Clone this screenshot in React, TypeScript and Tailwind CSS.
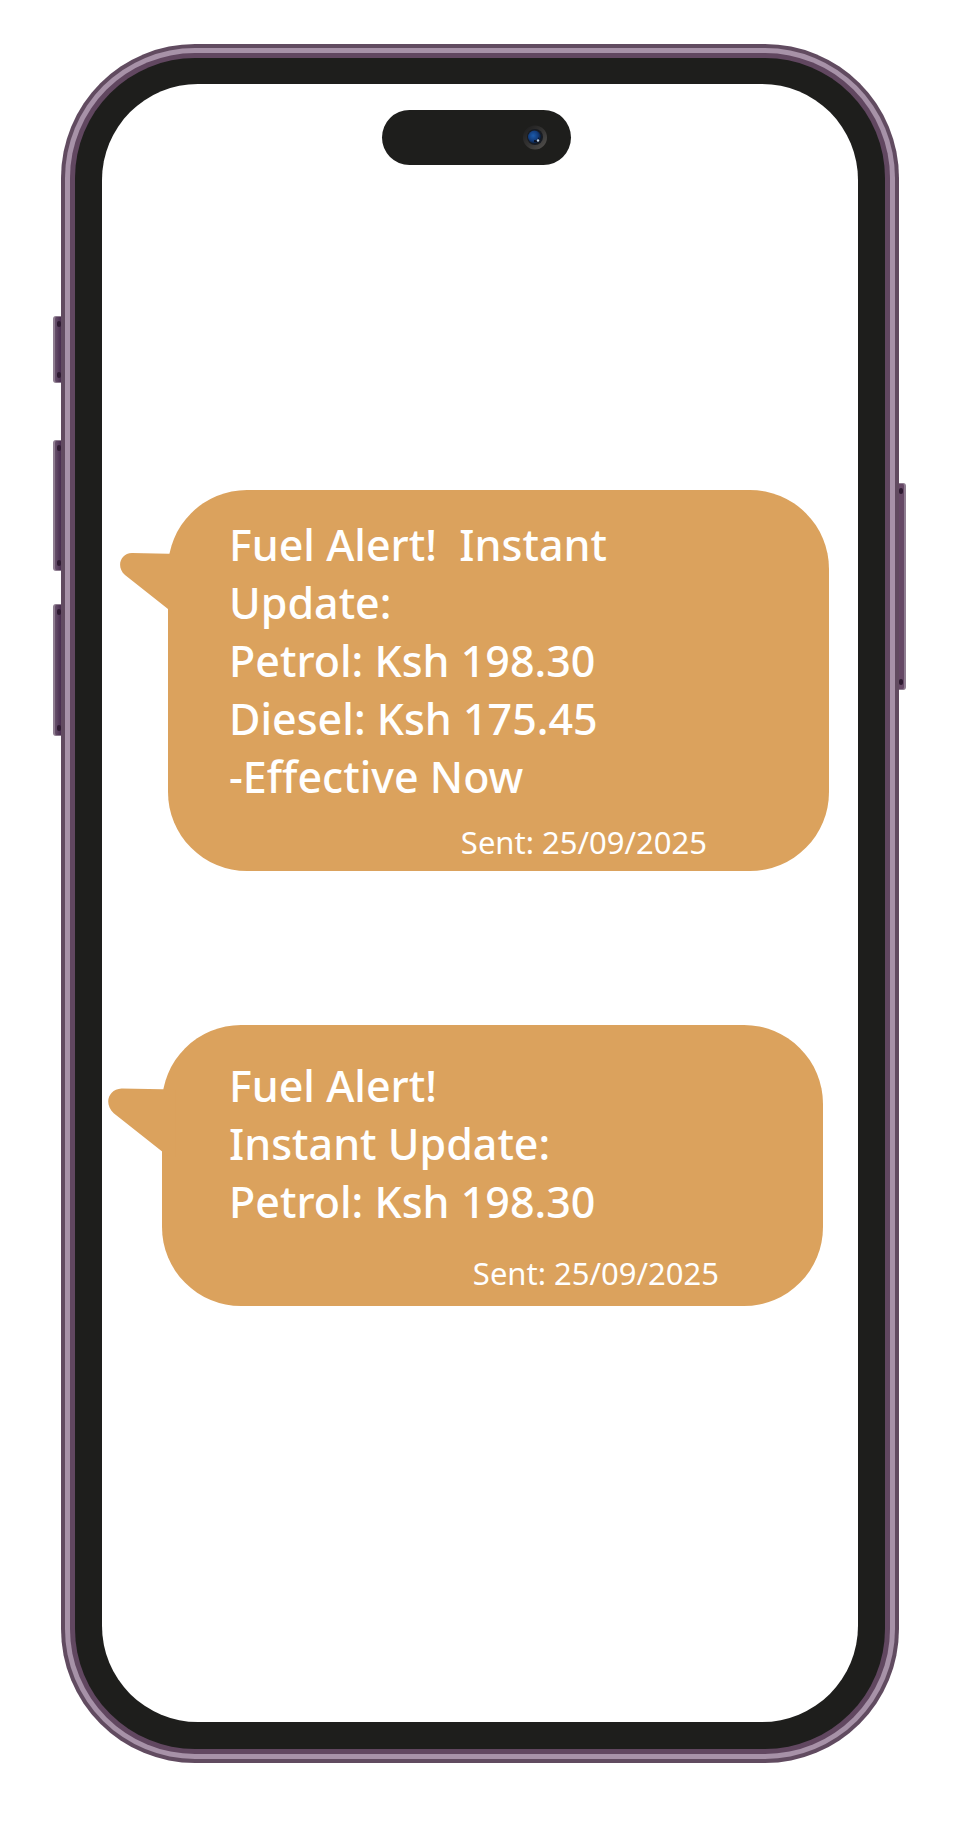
type MessageProps = {
  lines: string[];
  sent: string;
  className: string;
  tailClassName: string;
  bodyClassName: string;
  sentClassName: string;
};

function Message({ lines, sent, className, tailClassName, bodyClassName, sentClassName }: MessageProps) {
  return (
    <article className={`relative rounded-[79px] bg-[#dba25d] text-white ${className}`}>
      <svg
        aria-hidden="true"
        viewBox="0 0 70 64"
        className={`absolute top-[60px] fill-[#dba25d] ${tailClassName}`}
      >
        <path d="M12 3L60 4V69L48 59L5 25C-4 17 0 3.500 12 3Z" />
      </svg>
      <div className={`relative text-[43px] leading-[58px] font-medium ${bodyClassName}`}>
        {lines.map((line) => (
          <p key={line} className="whitespace-pre-wrap">
            {line}
          </p>
        ))}
      </div>
      <p className={`text-right text-[31px] leading-[42px] ${sentClassName}`}>{sent}</p>
    </article>
  );
}

function SideButton({ className }: { className: string }) {
  return (
    <span
      aria-hidden="true"
      className={`absolute flex w-[9px] flex-col justify-between border-y border-[#8f7e91] py-[4px] ${className}`}
    >
      <span className="h-[6px] w-[4px] self-center rounded-full bg-[#2e1a31]" />
      <span className="h-[6px] w-[4px] self-center rounded-full bg-[#2e1a31]" />
    </span>
  );
}

function Camera() {
  return (
    <svg aria-hidden="true" viewBox="0 0 26 26" className="h-[26px] w-[26px]">
      <defs>
        <linearGradient id="ring" x1="0" y1="0" x2="1" y2="1">
          <stop offset="0" stopColor="#1b1b1b" />
          <stop offset="0.5" stopColor="#343332" />
          <stop offset="1" stopColor="#555350" />
        </linearGradient>
        <radialGradient id="lens" cx="0.4" cy="0.4" r="0.65">
          <stop offset="0" stopColor="#1c5cad" />
          <stop offset="0.6" stopColor="#123b79" />
          <stop offset="1" stopColor="#0b1627" />
        </radialGradient>
      </defs>
      <circle cx="13" cy="12.500" r="12" fill="url(#ring)" />
      <circle cx="13" cy="12" r="8" fill="#171b22" />
      <circle cx="12.500" cy="12" r="6.500" fill="url(#lens)" />
      <path d="M12 15a4 4 0 0 0 5-3v5h-5z" fill="#0a1020" />
      <circle cx="16" cy="15.500" r="1.200" fill="#c9dcec" />
    </svg>
  );
}

export default function App() {
  return (
    <main className="bg-white pt-[44px] pr-[57px] pb-[61px] pl-[61px] font-['Noto_Sans',sans-serif]">
      <div className="relative">
        <SideButton className="top-[272px] -left-[8px] h-[67px] rounded-l-[3px] border-l-2 bg-linear-to-r from-[#66506a] to-[#43264a]" />
        <SideButton className="top-[396px] -left-[8px] h-[131px] rounded-l-[3px] border-l-2 bg-linear-to-r from-[#66506a] to-[#43264a]" />
        <SideButton className="top-[560px] -left-[8px] h-[132px] rounded-l-[3px] border-l-2 bg-linear-to-r from-[#66506a] to-[#43264a]" />
        <SideButton className="top-[439px] -right-[7px] h-[207px] rounded-r-[3px] border-r-2 bg-[#664966]" />

        <div className="relative rounded-[134px] bg-[#614b60] p-[4px]">
          <div className="rounded-[130px] bg-[#a792a8] p-[5px]">
            <div className="rounded-[125px] bg-[#614760] p-[5px]">
              <div className="rounded-[120px] bg-[#1e1e1c] px-[27px] pt-[26px] pb-[27px]">
                <div className="flex min-h-[1638px] flex-col rounded-[96px] bg-white pt-[26px]">
                  <div className="ml-[280px] flex h-[55px] w-[189px] items-center justify-end rounded-full bg-[#1e1e1c] pr-[23px]">
                    <Camera />
                  </div>
                  <div className="mt-[325px] flex flex-col gap-[154px]">
                    <Message
                      className="mr-[29px] ml-[66px] pt-[26px] pb-[8px]"
                      tailClassName="-left-[48px] h-[64px] w-[70px]"
                      bodyClassName="pr-[160px] pl-[61px]"
                      sentClassName="mt-[15px] pr-[122px]"
                      lines={[
                        "Fuel Alert!  Instant Update:",
                        "Petrol: Ksh 198.30",
                        "Diesel: Ksh 175.45",
                        "-Effective Now",
                      ]}
                      sent="Sent: 25/09/2025"
                    />
                    <Message
                      className="mr-[35px] ml-[60px] pt-[32px] pb-[12px]"
                      tailClassName="-left-[54px] h-[72px] w-[79px]"
                      bodyClassName="pr-[160px] pl-[67px]"
                      sentClassName="mt-[21px] pr-[104px]"
                      lines={["Fuel Alert!", "Instant Update:", "Petrol: Ksh 198.30"]}
                      sent="Sent: 25/09/2025"
                    />
                  </div>
                </div>
              </div>
            </div>
          </div>
        </div>
      </div>
    </main>
  );
}
